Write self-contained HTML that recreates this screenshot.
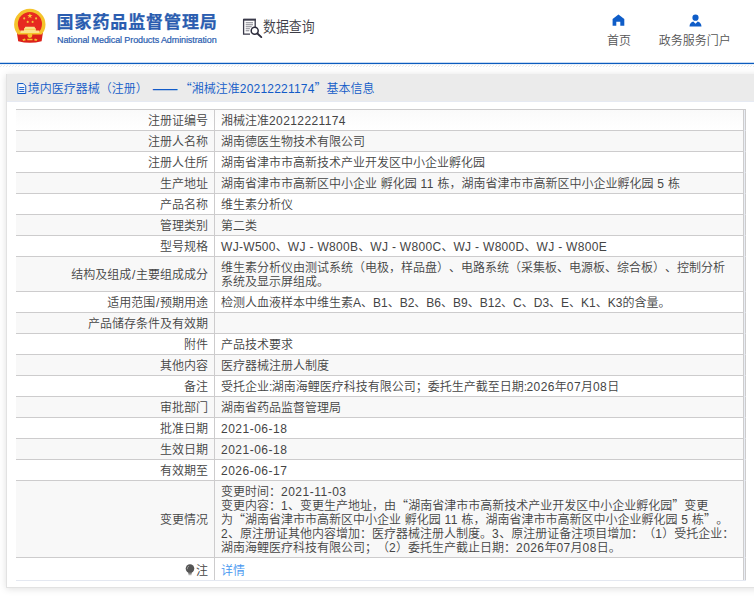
<!DOCTYPE html>
<html lang="zh-CN">
<head>
<meta charset="utf-8">
<title>国家药品监督管理局 数据查询</title>
<style>
html,body{margin:0;padding:0;}
body{width:754px;height:598px;overflow:hidden;background:#fff;position:relative;
  font-family:"Liberation Sans","Noto Sans CJK SC",sans-serif;font-size:12px;color:#444;font-weight:350;text-spacing-trim:space-all;}
.abs{position:absolute;}
.c{font-family:"Noto Sans CJK SC",sans-serif;line-height:0;}
#emblem{left:10px;top:6px;width:40px;height:40px;}
#logo-cn{left:56.600px;top:11.300px;-webkit-text-stroke:0.250px #2a5db0;height:24px;line-height:24px;font-size:17px;font-weight:bold;color:#2a5db0;
  letter-spacing:0.900px;white-space:nowrap;font-family:"Liberation Sans","Noto Sans CJK SC",sans-serif;}
#logo-en{left:57px;top:33.600px;height:12px;line-height:12px;font-size:9px;letter-spacing:-0.100px;-webkit-text-stroke:0.200px #2a5db0;color:#2a5db0;white-space:nowrap;}
#dq-icon{left:242px;top:18px;width:22px;height:21px;}
#dq-text{left:262.500px;top:16.400px;height:22px;line-height:22px;font-size:15px;color:#3c3c46;white-space:nowrap;
  transform-origin:0 50%;transform:scaleX(0.86);}
.nav{font-size:12px;color:#555;white-space:nowrap;height:16px;line-height:16px;text-align:center;}
#nav1{left:598.500px;top:32.600px;width:41px;}
#nav2{left:649.700px;top:32.600px;width:90px;}
#ic-home{left:611.800px;top:14.200px;width:13px;height:12px;}
#ic-user{left:688.600px;top:13.700px;width:13px;height:13px;}
#bl1{left:0;top:62px;width:754px;height:1px;background:#c6d9f1;}
#bl2{left:0;top:63px;width:754px;height:1px;background:#0b5cbe;}
#bl3{left:0;top:64px;width:754px;height:1px;background:#e9f0f9;}
#hatch{left:0;top:65px;width:754px;height:2px;
  background:repeating-linear-gradient(135deg,#fff 0,#fff 1.4px,#e9e9e9 1.4px,#e9e9e9 2.12px);}
#panel{left:6px;top:74px;width:780px;height:514px;background:#fff;box-sizing:border-box;
  border-left:1px solid #e2e2e2;border-bottom:1px solid #e2e2e2;
  box-shadow:0 1px 7px rgba(0,0,0,0.125);}
#phead{left:0;top:0;width:780px;height:28px;background:#ebebeb;border-bottom:1px solid #e6eaf3;box-sizing:border-box;}
#ptitle{left:20.800px;top:7px;height:16px;line-height:16px;color:#125bc8;white-space:nowrap;font-size:12px;}
#pico{left:10.400px;top:8.800px;width:9.500px;height:11px;}
table{position:absolute;left:16px;top:109px;width:730px;border-collapse:separate;border-spacing:0;table-layout:fixed;
  border-bottom:1px solid #e4e8f1;}
td{padding:4px 6px 2px;line-height:14px;font-size:12px;border-top:1px solid #cdcccd;vertical-align:middle;white-space:nowrap;overflow:hidden;}
td.l{width:186px;text-align:right;}
td.v{border-left:1px solid #cdcccd;border-right:1px solid #cdcccd;text-align:left;}
td.x{width:1px;padding:0;background:#e9edf4;border-right:1px solid #cdcccd;border-top-color:#e9edf4;}
tr.f td.x{border-top-color:#cdcccd;}
tr.g td.l, tr.g td.v{background:#f8f8f8;}
tr.f td.l, tr.f td.v{background:linear-gradient(#fafafa,#fff);}
.n{letter-spacing:0.400px;}.n2{letter-spacing:0.200px;}.w{letter-spacing:0.310px;}.d{letter-spacing:0.500px;}.k{letter-spacing:-0.600px;}.s{margin:0 0.650px;}
tr.last td{padding:6px 6px 2px;}
.dash{display:inline-block;width:24px;margin:0 4px;text-align:center;line-height:14px;font-weight:700;transform:translate(1.100px,0px) scaleX(1.280);}
a{color:#4596f0;text-decoration:none;}
</style>
</head>
<body>

<!-- header -->
<svg id="emblem" class="abs" viewBox="0 0 40 40">
  <defs><clipPath id="rc"><rect x="0" y="0" width="40" height="26.900"/></clipPath></defs>
  <path d="M6.900 26.500 Q7.500 31 8.200 35.200 Q19.900 38.400 31.600 35.200 Q32.300 31 32.900 26.500Z" fill="#dc2119"/>
  <path d="M4.100 18.500a15.700 15.700 0 0 1 31.400 0c0 4-1.600 7.800-4 10.100Q19.800 28.400 8.100 28.600C5.700 26.300 4.100 22.500 4.100 18.500Z" fill="#f5c42c"/>
  <circle cx="19.950" cy="17.950" r="12.050" fill="#e72a20" clip-path="url(#rc)"/>
  <path d="M19.900 7.200l.66 1.900h2l-1.620 1.200.62 1.900-1.660-1.180-1.660 1.180.62-1.900-1.620-1.200h2z" fill="#f7cf3a"/>
  <circle cx="14.200" cy="12.400" r="1.050" fill="#f3c03a"/><circle cx="26.100" cy="12.400" r="1.050" fill="#f3c03a"/>
  <circle cx="17.700" cy="15.900" r="1.050" fill="#f3c03a"/><circle cx="22.600" cy="15.900" r="1.050" fill="#f3c03a"/>
  <path d="M15.300 20.800h9.200l.7 1.500h.6v2.100h3.600v2.600h-19v-2.600h3.600v-2.100h.6z" fill="#fbe48a"/>
  <path d="M14.200 23.400h11.400" stroke="#f6c93c" stroke-width="0.700"/>
  <circle cx="19.900" cy="29.600" r="2.400" fill="#f5c42c"/>
  <path d="M12.300 33.400l2.600-1 .9 1.800-2.400.9zM27.500 33.400l-2.600-1-.9 1.800 2.400.9zM17.300 32.700h5.200v1.600h-5.200z" fill="#f5c42c"/>
</svg>
<div id="logo-cn" class="abs">国家药品监督管理局</div>
<div id="logo-en" class="abs">National Medical Products Administration</div>

<svg id="dq-icon" class="abs" viewBox="0 0 22 21">
  <path d="M1.600 1.500h11.600v7.500M1.600 1.500v14.600h6.400" fill="none" stroke="#3a3a4a" stroke-width="1.300"/>
  <path d="M1 1.700h12.800" stroke="#3a3a4a" stroke-width="1.700"/>
  <path d="M3.700 4.700h7.300M3.700 6.700h7.300M3.700 8.700h6M3.700 10.700h4.200M3.700 12.700h3.600" stroke="#85858f" stroke-width="1.100"/>
  <circle cx="12.700" cy="12.700" r="3.500" fill="#fff" stroke="#2c2c3c" stroke-width="1.500"/>
  <path d="M15.400 15.500l3.900 3.600" stroke="#2c2c3c" stroke-width="1.900" stroke-linecap="round"/>
</svg>
<div id="dq-text" class="abs">数据查询</div>

<svg id="ic-home" class="abs" viewBox="0 0 13 12">
  <path d="M6.450 0.500L0.600 5V11.700H4.300V7.700H8.300V11.700H12.300V5Z" fill="#0f5dc8"/>
</svg>
<div id="nav1" class="abs nav">首页</div>
<svg id="ic-user" class="abs" viewBox="0 0 13 13">
  <circle cx="6.500" cy="3.700" r="3.100" fill="#0f5dc8"/>
  <path d="M0.500 12.600C0.500 9.600 2.600 7.900 4.300 7.600L6.500 9.800L8.700 7.600C10.400 7.900 12.500 9.600 12.500 12.600Z" fill="#0f5dc8"/>
</svg>
<div id="nav2" class="abs nav">政务服务门户</div>

<div id="bl1" class="abs"></div><div id="bl2" class="abs"></div><div id="bl3" class="abs"></div>
<div id="hatch" class="abs"></div>

<!-- panel -->
<div id="panel" class="abs">
  <div id="phead" class="abs">
    <svg id="pico" class="abs" viewBox="0 0 9 11">
      <path d="M0.500 0.500H6L8.500 3V10.500H0.500Z" fill="#f4f6fb" stroke="#125bc8" stroke-width="1"/>
      <path d="M2 4.500H7M2 6.500H7M2 8.500H7" stroke="#125bc8" stroke-width="0.900"/>
    </svg>
    <div id="ptitle" class="abs">境内医疗器械（注册）<span class="c dash">——</span><span class="c">“</span>湘械注准<span class="n2">20212221174</span><span class="c">”</span>基本信息</div>
  </div>
</div>

<table>
  <tr class="f"><td class="l">注册证编号</td><td class="v">湘械注准<span class="n">20212221174</span></td><td class="x"></td></tr>
  <tr class="g"><td class="l">注册人名称</td><td class="v">湖南德医生物技术有限公司</td><td class="x"></td></tr>
  <tr><td class="l">注册人住所</td><td class="v">湖南省津市市高新技术产业开发区中小企业孵化园</td><td class="x"></td></tr>
  <tr class="g"><td class="l">生产地址</td><td class="v">湖南省津市市高新区中小企业<span class="n"> </span>孵化园<span class="n"> 11 </span>栋，湖南省津市市高新区中小企业孵化园<span class="n"> 5 </span>栋</td><td class="x"></td></tr>
  <tr><td class="l">产品名称</td><td class="v">维生素分析仪</td><td class="x"></td></tr>
  <tr class="g"><td class="l">管理类别</td><td class="v">第二类</td><td class="x"></td></tr>
  <tr><td class="l">型号规格</td><td class="v"><span class="w">WJ-W500</span>、<span class="w">WJ - W800B</span>、<span class="w">WJ - W800C</span>、<span class="w">WJ - W800D</span>、<span class="w">WJ - W800E</span></td><td class="x"></td></tr>
  <tr class="g"><td class="l">结构及组成<span class="s">/</span>主要组成成分</td><td class="v">维生素分析仪由测试系统（电极，样品盘）、电路系统（采集板、电源板、综合板）、控制分析<br>系统及显示屏组成。</td><td class="x"></td></tr>
  <tr><td class="l">适用范围<span class="s">/</span>预期用途</td><td class="v">检测人血液样本中维生素A、B1、B2、B6、B9、B12、C、D3、E、K1、K3的含量。</td><td class="x"></td></tr>
  <tr class="g"><td class="l">产品储存条件及有效期</td><td class="v">&nbsp;</td><td class="x"></td></tr>
  <tr><td class="l">附件</td><td class="v">产品技术要求</td><td class="x"></td></tr>
  <tr class="g"><td class="l">其他内容</td><td class="v">医疗器械注册人制度</td><td class="x"></td></tr>
  <tr><td class="l">备注</td><td class="v">受托企业<span class="k">:</span>湖南海鲤医疗科技有限公司；委托生产截至日期<span class="k">:</span><span class="n">2026</span>年<span class="n">07</span>月<span class="n">08</span>日</td><td class="x"></td></tr>
  <tr class="g"><td class="l">审批部门</td><td class="v">湖南省药品监督管理局</td><td class="x"></td></tr>
  <tr><td class="l">批准日期</td><td class="v"><span class="d">2021-06-18</span></td><td class="x"></td></tr>
  <tr class="g"><td class="l">生效日期</td><td class="v"><span class="d">2021-06-18</span></td><td class="x"></td></tr>
  <tr><td class="l">有效期至</td><td class="v"><span class="d">2026-06-17</span></td><td class="x"></td></tr>
  <tr class="g"><td class="l">变更情况</td><td class="v">变更时间：<span class="d">2021-11-03</span><br>变更内容：<span class="n">1</span>、变更生产地址，由<span class="c">“</span>湖南省津市市高新技术产业开发区中小企业孵化园<span class="c">”</span>变更<br>为<span class="c">“</span>湖南省津市市高新区中小企业<span class="n"> </span>孵化园<span class="n"> 11 </span>栋，湖南省津市市高新区中小企业孵化园<span class="n"> 5 </span>栋<span class="c">”</span>。<br><span class="n">2</span>、原注册证其他内容增加：医疗器械注册人制度。<span class="n">3</span>、原注册证备注项目增加：（<span class="n">1</span>）受托企业：<br>湖南海鲤医疗科技有限公司；（<span class="n">2</span>）委托生产截止日期：<span class="n">2026</span>年<span class="n">07</span>月<span class="n">08</span>日。</td><td class="x"></td></tr>
  <tr class="last"><td class="l"><svg width="10" height="12" viewBox="0 0 10 12" style="vertical-align:-1px;margin-right:0.600px"><circle cx="5" cy="4.600" r="4.300" fill="#555"/><path d="M3.300 8h3.400v1.800h-3.400z" fill="#666"/><path d="M2.300 5.200a2.700 2.700 0 0 1 1.700-3" fill="none" stroke="#aaa" stroke-width="0.800"/><path d="M3.500 10.700h3" stroke="#999" stroke-width="1"/></svg>注</td><td class="v"><a>详情</a></td><td class="x"></td></tr>
</table>

</body>
</html>
